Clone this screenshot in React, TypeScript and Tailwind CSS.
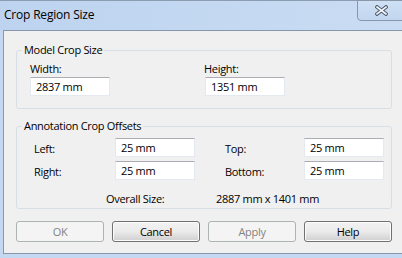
import React from 'react';

function TextBox({ value, className = '' }: { value: string; className?: string }) {
  return (
    <div
      className={`h-[19px] w-[80px] flex items-center pl-[5px] bg-white border border-[#e3e9ef] border-t-[#abadb3] text-black ${className}`}
    >
      {value}
    </div>
  );
}

function Button({ label, disabled = false }: { label: string; disabled?: boolean }) {
  if (disabled) {
    return (
      <div className="w-[88px] h-[21px] flex items-center justify-center rounded-[3px] border border-[#adb2b5] bg-[#f4f4f4] text-[#838383]">
        {label}
      </div>
    );
  }
  return (
    <div className="w-[88px] h-[21px] flex items-center justify-center rounded-[3px] border border-[#707070] bg-gradient-to-b from-[#f2f2f2] via-[#ebebeb] to-[#cfcfcf] shadow-[inset_0_0_0_1px_#fcfcfc] text-black">
      {label}
    </div>
  );
}

function GroupBox({ title, className = '', children }: { title: string; className?: string; children: React.ReactNode }) {
  return (
    <fieldset className={`border border-[#d5dfe5] rounded-[3px] px-[5px] ${className}`}>
      <legend className="px-[2px] leading-[16px] text-black">{title}</legend>
      {children}
    </fieldset>
  );
}

export default function App() {
  return (
    <div className="w-[402px] h-[258px] overflow-hidden bg-[#c4d8f1] flex flex-col font-['Open_Sans',sans-serif] text-[11px] leading-[16px] tracking-[-0.3px]">
      {/* Title bar */}
      <div className="relative h-[30px] shrink-0 flex items-center pl-[4px] border-t border-[#8c9db2] bg-gradient-to-r from-[#bdd3ef] to-[#c9dcf3]">
        <span className="text-[12px] text-black pb-[1px] tracking-[-0.2px]">Crop Region Size</span>
        <div className="absolute left-[357px] -top-[1px] w-[50px] h-[21px] rounded-bl-[4px] border border-[#8797ab] bg-gradient-to-b from-[#cfe0f5] to-[#c2d6ef] flex items-center pl-[17px]">
          <svg width="13" height="11" viewBox="0 0 13 11">
            <path d="M2 2 L11 9 M11 2 L2 9" stroke="#4d5a6b" strokeWidth="3.6" strokeLinecap="square" fill="none" />
            <path d="M2 2 L11 9 M11 2 L2 9" stroke="#f4f7fb" strokeWidth="1.6" strokeLinecap="square" fill="none" />
          </svg>
        </div>
      </div>

      {/* Client area */}
      <div className="ml-[3px] w-[402px] h-[224px] shrink-0 border-l border-t border-b border-[#8797ab] bg-[#f0f0f0] pl-[12px] pt-[11px] flex flex-col">
        <div className="w-[376px]">
          <GroupBox title="Model Crop Size" className="pb-[12px]">
            <div className="pl-[8px] pt-[3px] grid grid-cols-[175px_1fr]">
              <div className="flex flex-col">
                <span className="text-black">Width:</span>
                <TextBox value="2837 mm" />
              </div>
              <div className="flex flex-col">
                <span className="text-black -ml-[1px]">Height:</span>
                <TextBox value="1351 mm" />
              </div>
            </div>
          </GroupBox>

          <GroupBox title="Annotation Crop Offsets" className="mt-[9px] pb-[1px]">
            <div className="pl-[12px] pt-[4px]">
              <div className="grid grid-cols-[81px_80px_30px_79px_80px] gap-y-[4px] items-center">
                <span className="text-black pt-[2px]">Left:</span>
                <TextBox value="25 mm" />
                <span />
                <span className="text-black pt-[2px]">Top:</span>
                <TextBox value="25 mm" />
                <span className="text-black pt-[2px]">Right:</span>
                <TextBox value="25 mm" />
                <span />
                <span className="text-black pt-[2px]">Bottom:</span>
                <TextBox value="25 mm" />
              </div>
              <div className="flex mt-[11px] pl-[72px] text-black">
                <span className="w-[110px]">Overall Size:</span>
                <span>2887 mm x 1401 mm</span>
              </div>
            </div>
          </GroupBox>
        </div>

        <div className="mt-[12px] flex gap-[8px]">
          <Button label="OK" disabled />
          <Button label="Cancel" />
          <Button label="Apply" disabled />
          <Button label="Help" />
        </div>
      </div>
    </div>
  );
}
